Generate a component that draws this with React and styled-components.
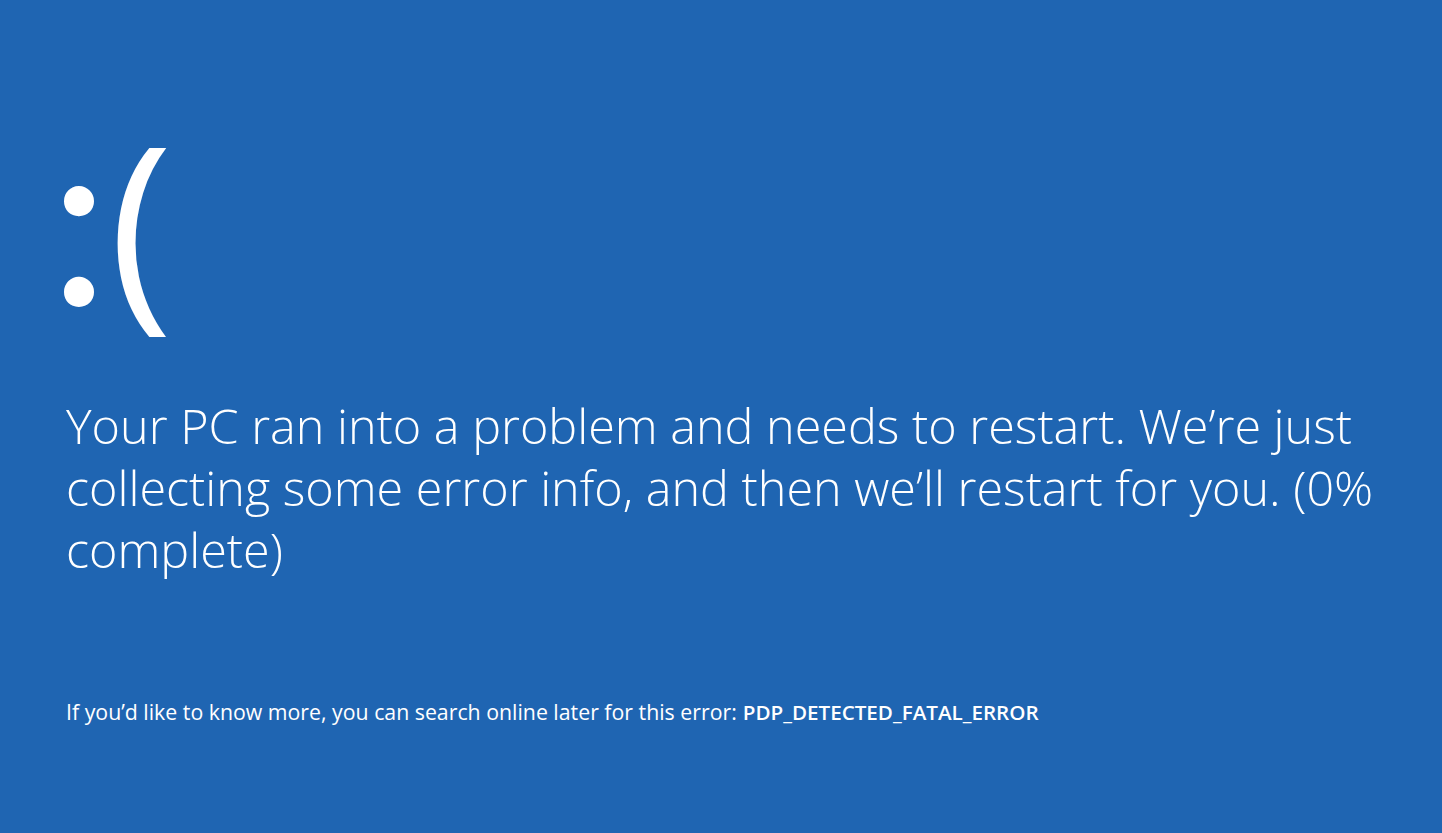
import styled, { createGlobalStyle } from 'styled-components'

const Global = createGlobalStyle`
  html, body {
    margin: 0;
    padding: 0;
    background: #1f65b2;
  }
`

const Screen = styled.div`
  width: 1442px;
  height: 833px;
  background: #1f65b2;
  color: #fff;
  font-family: 'Open Sans', 'Noto Sans', sans-serif;
  padding: 120px 0 0 66px;
  box-sizing: border-box;
  display: flex;
  flex-direction: column;
  overflow: hidden;
`

const Face = styled.div`
  display: flex;
  align-items: center;
  height: 230px;
  line-height: 1;
`

const Colon = styled.span`
  display: inline-flex;
  justify-content: center;
  width: 26px;
  font-family: Lato, 'Open Sans', sans-serif;
  font-size: 240px;
  font-weight: 400;
  margin-top: -46px;
`

const Paren = styled.span`
  font-size: 216px;
  font-weight: 400;
  margin-left: 17px;
  margin-top: -32px;
`

const Message = styled.p`
  margin: 44px 0 0;
  font-size: 48.5px;
  font-weight: 300;
  line-height: 62px;
  width: 1340px;
`

const Footer = styled.p`
  margin: 117px 0 0;
  font-size: 21.3px;
  font-weight: 400;
`

const Code = styled.span`
  font-weight: 600;
  font-size: 20.6px;
  margin-left: 6px;
`

const App = () => {
  return (
    <>
      <Global />
      <Screen>
        <Face>
          <Colon>:</Colon>
          <Paren>(</Paren>
        </Face>
        <Message>
          Your PC ran into a problem and needs to restart. We’re just collecting some error info, and then we’ll restart for you. (0% complete)
        </Message>
        <Footer>
          If you’d like to know more, you can search online later for this error:
          <Code>PDP_DETECTED_FATAL_ERROR</Code>
        </Footer>
      </Screen>
    </>
  )
}

export default App
